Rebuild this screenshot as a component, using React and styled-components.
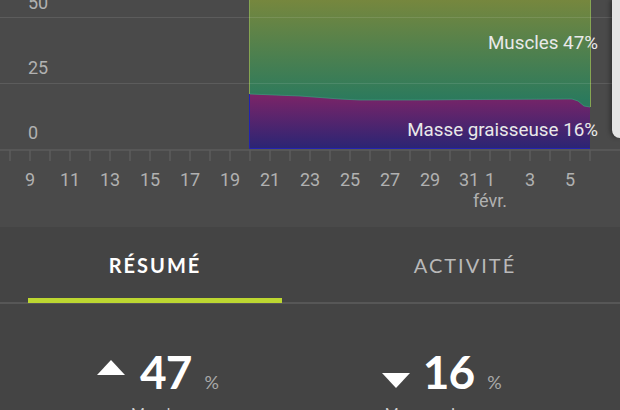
import styled, { createGlobalStyle } from 'styled-components';

const GlobalStyle = createGlobalStyle`
  html, body {
    margin: 0;
    padding: 0;
    background: #444444;
    overflow: hidden;
  }
`;

const xLabels = [
  { text: '9', x: 30 },
  { text: '11', x: 70 },
  { text: '13', x: 110 },
  { text: '15', x: 150 },
  { text: '17', x: 190 },
  { text: '19', x: 230 },
  { text: '21', x: 270 },
  { text: '23', x: 310 },
  { text: '25', x: 350 },
  { text: '27', x: 390 },
  { text: '29', x: 430 },
  { text: '31', x: 469 },
  { text: '1', x: 490 },
  { text: '3', x: 530 },
  { text: '5', x: 570 }
];

const yLabels = [
  { text: '50', y: 3 },
  { text: '25', y: 68 },
  { text: '0', y: 133 }
];

const ticks = Array.from({ length: 30 }, (_, i) => 10 + i * 20);

// limite haute de la masse graisseuse (en px)
const fatTop = 'M250,94 L300,96 L340,99 L360,100 L420,100 L470,99.5 L572,99 L578,101 L584,106 L590,107';

const stats = [
  { value: 47, label: 'Muscles', down: false },
  { value: 16, label: 'Masse graisseuse', down: true }
];

const Page = styled.div`
  width: 620px;
  height: 410px;
  overflow: hidden;
  position: relative;
  background: #444444;
  font-family: Lato, 'Open Sans', sans-serif;
`;

const ChartSection = styled.div`
  position: relative;
  height: 227px;
  background: #4a4a4a;
  font-family: Roboto, 'Liberation Sans', sans-serif;
`;

const ChartSvg = styled.svg`
  position: absolute;
  left: 0;
  top: 0;
`;

const AxisLabel = styled.span`
  position: absolute;
  font-size: 18px;
  line-height: 20px;
  color: #b1b1b1;
  white-space: nowrap;
  transform: translate(-50%, -50%);
`;

const YLabel = styled(AxisLabel)`
  left: 28px;
  transform: translateY(-50%);
`;

const SeriesLabel = styled.span`
  position: absolute;
  right: 22px;
  font-size: 18.8px;
  line-height: 20px;
  color: #e9e9e9;
  white-space: nowrap;
  transform: translateY(-50%);
`;

const SideEdge = styled.div`
  position: absolute;
  top: 0;
  right: 0;
  width: 8px;
  height: 138px;
  background: #e4e4e4;
  border-bottom-left-radius: 12px;
  box-shadow: -2px 0 4px rgba(0, 0, 0, 0.35);
`;

const Tabs = styled.div`
  display: grid;
  grid-template-columns: 1fr 1fr;
  height: 75px;
  border-bottom: 2px solid #575757;
`;

const Tab = styled.div`
  position: relative;
  display: flex;
  align-items: center;
  justify-content: center;
  font-size: 20px;
  letter-spacing: 2px;
  font-weight: ${(p) => (p.$active ? 700 : 400)};
  color: ${(p) => (p.$active ? '#ffffff' : '#b9b9b9')};

  &::after {
    content: '';
    display: ${(p) => (p.$active ? 'block' : 'none')};
    position: absolute;
    left: 28px;
    right: 28px;
    bottom: -1px;
    height: 5px;
    background: #bdd731;
  }
`;

const StatsRow = styled.div`
  display: flex;
  gap: 163px;
  padding: 45px 0 0 97px;
`;

const Stat = styled.div`
  display: flex;
  flex-direction: column;
  align-items: center;
`;

const StatLine = styled.div`
  display: flex;
  align-items: baseline;
`;

const Arrow = styled.svg`
  align-self: flex-start;
  margin-top: ${(p) => (p.$down ? '24px' : '11px')};
  margin-right: ${(p) => (p.$down ? '13px' : '15px')};
  fill: #ffffff;
`;

const Value = styled.span`
  font-size: 46px;
  line-height: 46px;
  font-weight: 700;
  letter-spacing: -1px;
  color: #ffffff;
`;

const Unit = styled.span`
  margin-left: 13px;
  font-size: 18px;
  color: #a9a9a9;
`;

const StatLabel = styled.div`
  margin-top: 8px;
  font-size: 15px;
  line-height: 20px;
  color: #d0d0d0;
  white-space: nowrap;
`;

function Chart() {
  return (
    <ChartSection>
      <ChartSvg width="620" height="227" viewBox="0 0 620 227">
        <defs>
          <linearGradient id="muscle" x1="0" y1="0" x2="0" y2="100" gradientUnits="userSpaceOnUse">
            <stop offset="0" stopColor="#76873e" />
            <stop offset="1" stopColor="#2b7a5d" />
          </linearGradient>
          <linearGradient id="fat" x1="0" y1="94" x2="0" y2="149" gradientUnits="userSpaceOnUse">
            <stop offset="0" stopColor="#7c2467" />
            <stop offset="1" stopColor="#2a2574" />
          </linearGradient>
        </defs>
        <rect x="250" y="-10" width="340" height="159" fill="url(#muscle)" />
        <path d="M249.5,-10 L249.5,94" stroke="#93bb55" strokeOpacity="0.8" fill="none" />
        <path d="M590.5,-10 L590.5,107" stroke="#93bb55" strokeOpacity="0.8" fill="none" />
        <path d={`${fatTop} L590,149 L250,149 Z`} fill="url(#fat)" />
        <path d={fatTop} stroke="#3c9a7c" strokeOpacity="0.7" fill="none" />
        <path d="M249.5,94 L249.5,148.5 L590,148.5" stroke="#2323b0" fill="none" />
        <g stroke="#ffffff" strokeOpacity="0.1">
          <line x1="0" x2="612" y1="17.5" y2="17.5" />
          <line x1="0" x2="612" y1="83.5" y2="83.5" />
        </g>
        <g stroke="#5d5d5d" strokeWidth="1.5">
          <line x1="0" x2="620" y1="150" y2="150" />
          {ticks.map((x) => (
            <line key={x} x1={x} x2={x} y1="150" y2="161" />
          ))}
        </g>
      </ChartSvg>
      {yLabels.map((l) => (
        <YLabel key={l.text} style={{ top: l.y }}>
          {l.text}
        </YLabel>
      ))}
      {xLabels.map((l) => (
        <AxisLabel key={l.text} style={{ left: l.x, top: 180 }}>
          {l.text}
        </AxisLabel>
      ))}
      <AxisLabel style={{ left: 490, top: 201 }}>févr.</AxisLabel>
      <SeriesLabel style={{ top: 43 }}>Muscles 47%</SeriesLabel>
      <SeriesLabel style={{ top: 130 }}>Masse graisseuse 16%</SeriesLabel>
      <SideEdge />
    </ChartSection>
  );
}

export default function App() {
  return (
    <Page>
      <GlobalStyle />
      <Chart />
      <Tabs>
        <Tab $active>RÉSUMÉ</Tab>
        <Tab>ACTIVITÉ</Tab>
      </Tabs>
      <StatsRow>
        {stats.map((s) => (
          <Stat key={s.label}>
            <StatLine>
              <Arrow $down={s.down} width="28" height="15" viewBox="0 0 28 15">
                {s.down ? <polygon points="0,0 28,0 14,15" /> : <polygon points="14,0 28,15 0,15" />}
              </Arrow>
              <Value>{s.value}</Value>
              <Unit>%</Unit>
            </StatLine>
            <StatLabel>{s.label}</StatLabel>
          </Stat>
        ))}
      </StatsRow>
    </Page>
  );
}
